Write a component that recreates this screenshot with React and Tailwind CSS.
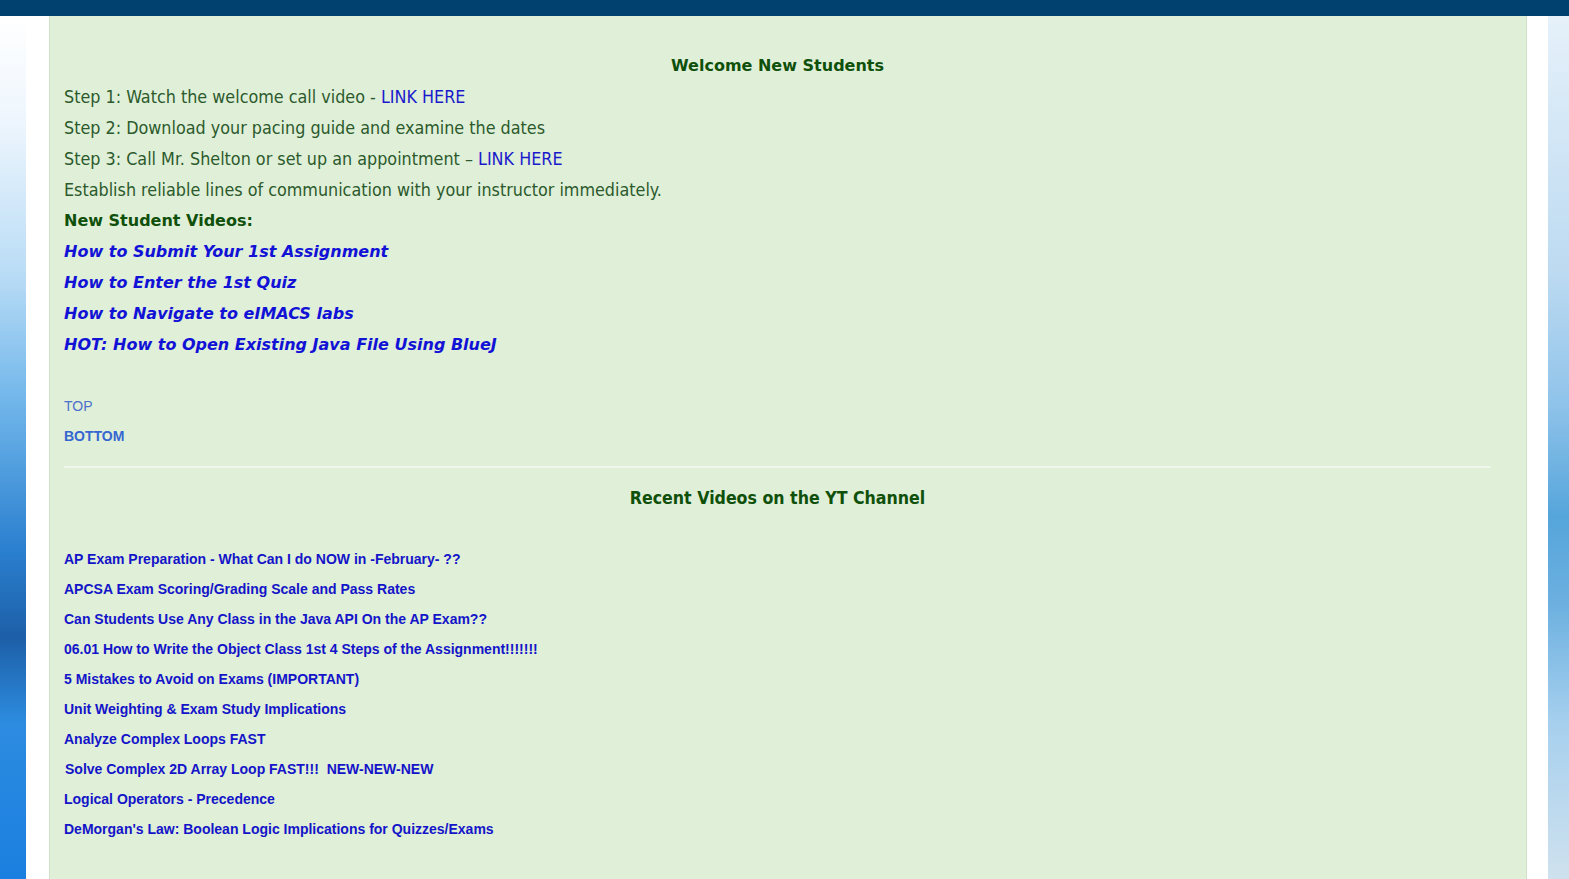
import React from "react";

const steps = [
  { text: "Step 1: Watch the welcome call video - ", link: "LINK HERE" },
  { text: "Step 2: Download your pacing guide and examine the dates" },
  { text: "Step 3: Call Mr. Shelton or set up an appointment \u2013 ", link: "LINK HERE" },
  { text: "Establish reliable lines of communication with your instructor immediately." },
];

const newVideos = [
  "How to Submit Your 1st Assignment",
  "How to Enter the 1st Quiz",
  "How to Navigate to eIMACS labs",
  "HOT: How to Open Existing Java File Using BlueJ",
];

const recent = [
  "AP Exam Preparation - What Can I do NOW in -February- ??",
  "APCSA Exam Scoring/Grading Scale and Pass Rates",
  "Can Students Use Any Class in the Java API On the AP Exam??",
  "06.01 How to Write the Object Class 1st 4 Steps of the Assignment!!!!!!!",
  "5 Mistakes to Avoid on Exams (IMPORTANT)",
  "Unit Weighting & Exam Study Implications",
  "Analyze Complex Loops FAST",
  "Solve Complex 2D Array Loop FAST!!!  NEW-NEW-NEW",
  "Logical Operators - Precedence",
  "DeMorgan's Law: Boolean Logic Implications for Quizzes/Exams",
];

const App = () => {
  return (
    <div className="flex h-[879px] flex-col overflow-hidden bg-white">
      <div className="h-[16px] shrink-0 bg-[#00416f]"></div>
      <div className="flex flex-1">
        <div className="w-[26px] bg-[linear-gradient(180deg,#ffffff_0%,#eef6fd_12%,#b9dcf6_30%,#6fb5ea_45%,#2a7fcf_62%,#1d5fa8_72%,#2d8ce0_82%,#1a7fe0_100%)]"></div>
        <div className="w-[23px] bg-white"></div>
        <div className="w-[1478px] border-x border-[#cfe2c6] bg-[#dfefd8] pl-[14px] pr-[35px] pt-[34px] font-['DejaVu_Sans_Condensed','DejaVu_Sans',sans-serif] text-[17.8px]">
          <div className="text-center font-['DejaVu_Sans',sans-serif] text-[16px] font-bold leading-[31px] text-[#0f500a]">
            Welcome New Students
          </div>
          {steps.map((s, i) => (
            <div key={i} className="leading-[31px] text-[#2c5a2c]">
              {s.text}
              {s.link && <a className="text-[#1a1acc]">{s.link}</a>}
            </div>
          ))}
          <div className="font-['DejaVu_Sans',sans-serif] text-[16px] font-bold leading-[31px] text-[#0f500a]">
            New Student Videos:
          </div>
          {newVideos.map((v) => (
            <div key={v} className="font-['DejaVu_Sans',sans-serif] text-[16px] font-bold italic leading-[31px] text-[#1212d6]">
              {v}
            </div>
          ))}
          <div className="mt-[31px] font-['Liberation_Sans',Arial,sans-serif] text-[14px] leading-[30px]">
            <div className="text-[#4d70cc]">TOP</div>
            <div className="font-bold text-[#3566d1]">BOTTOM</div>
          </div>
          <hr className="mt-[15px] border-t-2 border-[#eef7ea]" />
          <div className="mt-[15px] text-center font-['DejaVu_Sans_Condensed','DejaVu_Sans',sans-serif] text-[17.6px] font-bold leading-[31px] text-[#0f500a]">
            Recent Videos on the YT Channel
          </div>
          <div className="mt-[30px] font-['Liberation_Sans',Arial,sans-serif] text-[14px] font-bold leading-[30px] text-[#1414c8]">
            {recent.map((r, i) => (
              <div key={r} className={i === 7 ? "ml-[1px] whitespace-pre" : "whitespace-pre"}>
                {r}
              </div>
            ))}
          </div>
        </div>
        <div className="w-[21px] bg-white"></div>
        <div className="flex-1 bg-[linear-gradient(180deg,#e6f1fa_0%,#bcdaf1_30%,#8fc3ea_45%,#55a5db_58%,#6cb0e0_68%,#a7d0ee_82%,#cfe1ee_100%)]"></div>
      </div>
    </div>
  );
};

export default App;
